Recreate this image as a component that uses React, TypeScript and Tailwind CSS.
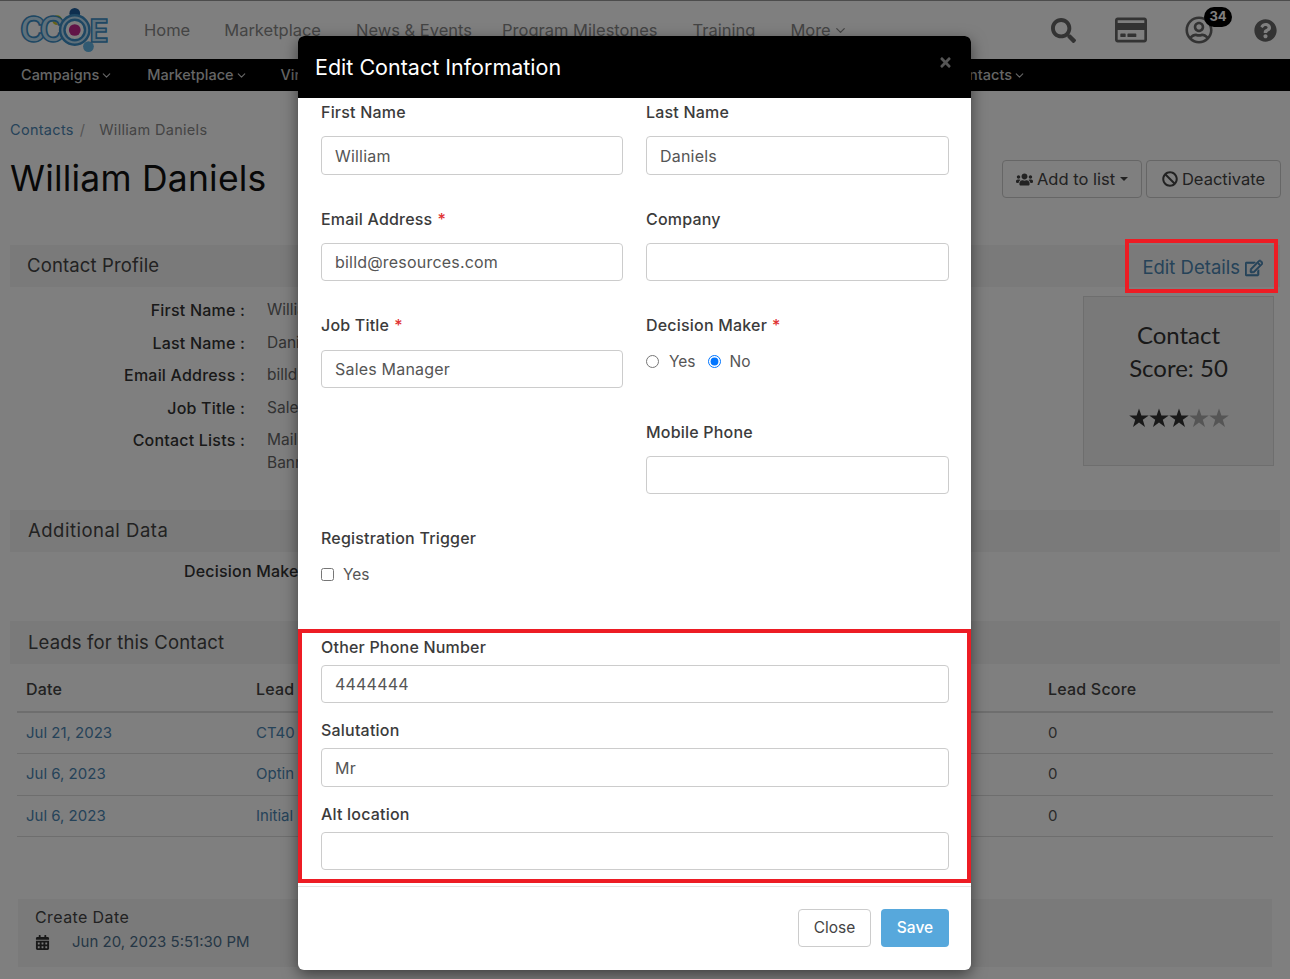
import {
  FaBan,
  FaCalendarAlt,
  FaQuestionCircle,
  FaRegCreditCard,
  FaRegEdit,
  FaRegUserCircle,
  FaSearch,
  FaTimes,
  FaUsers,
} from 'react-icons/fa'
import { ChevronDown } from 'lucide-react'

const TOP_NAV = [
  { label: 'Home', left: 'ml-[36px]' },
  { label: 'Marketplace', left: 'ml-[34px]' },
  { label: 'News & Events', left: 'ml-[35px]' },
  { label: 'Program Milestones', left: 'ml-[30px]' },
  { label: 'Training', left: 'ml-[35px]' },
]

const PROFILE_ROWS = [
  { label: 'First Name :', value: 'William', row: 'h-[32px]' },
  { label: 'Last Name :', value: 'Daniels', row: 'h-[33px]' },
  { label: 'Email Address :', value: 'billd@resources.com', row: 'h-[32px]' },
  { label: 'Job Title :', value: 'Sales Manager', row: 'h-[33px]' },
  { label: 'Contact Lists :', value: 'Mailing', row: 'mt-[4px] h-[23px]' },
  { label: '', value: 'Banner', row: 'h-[23px]' },
]

const LEADS = [
  { date: 'Jul 21, 2023', lead: 'CT40', score: '0' },
  { date: 'Jul 6, 2023', lead: 'Optin', score: '0' },
  { date: 'Jul 6, 2023', lead: 'Initial', score: '0' },
]

function Logo() {
  return (
    <svg width="88" height="52" viewBox="0 0 90 52" className="ml-[20px] shrink-0">
      <circle cx="38" cy="16" r="5" fill="#c9c72e" />
      <circle cx="56" cy="9" r="5.5" fill="#1c5f9e" />
      <circle cx="70" cy="43" r="5.5" fill="#62b5e5" />
      <text x="0" y="38" fontFamily="Inter, sans-serif" fontWeight="700" fontSize="36" fill="#bfe0f5" stroke="#3d8fc6" strokeWidth="1.6">C</text>
      <text x="20" y="38" fontFamily="Inter, sans-serif" fontWeight="700" fontSize="36" fill="#bfe0f5" stroke="#3d8fc6" strokeWidth="1.6">C</text>
      <text x="71" y="38" fontFamily="Inter, sans-serif" fontWeight="700" fontSize="32" fill="#bfe0f5" stroke="#3d8fc6" strokeWidth="1.6" textLength="18">E</text>
      <circle cx="56" cy="26" r="15" fill="#bfe0f5" stroke="#3d8fc6" strokeWidth="2.5" />
      <circle cx="56" cy="26" r="10.5" fill="#fff" stroke="#3d8fc6" strokeWidth="2.5" />
      <circle cx="56" cy="26" r="6" fill="#c3288f" />
    </svg>
  )
}

function Star({ filled }: { filled: boolean }) {
  return (
    <svg width="20" height="20" viewBox="0 0 20 20" className={filled ? 'fill-[#333]' : 'fill-[#aaa]'}>
      <polygon points="10,0.5 12.4,7.4 19.8,7.4 13.8,11.8 16,19 10,14.6 4,19 6.2,11.8 0.2,7.4 7.6,7.4" />
    </svg>
  )
}

function SectionBar({ title, className }: { title: string; className: string }) {
  return (
    <div className={`flex items-center bg-[#f5f5f5] mx-[10px] text-[18.5px] text-[#444] ${className}`}>
      {title}
    </div>
  )
}

function FieldLabel({ children, required }: { children: string; required?: boolean }) {
  return (
    <div className="h-[24px] leading-[24px] text-[16px] font-medium text-[#3b3b3b] tracking-[0.2px]">
      {children}
      {required && <span className="text-[#e03131] ml-[5px]">*</span>}
    </div>
  )
}

function TextInput({ value, height = 'h-[38px]' }: { value?: string; height?: string }) {
  return (
    <input
      readOnly
      value={value ?? ''}
      className={`block w-full ${height} rounded-[4px] border border-[#ccc] bg-white px-[13px] text-[16px] text-[#555] tracking-[0.2px] outline-none`}
    />
  )
}

function Background() {
  return (
    <div className="h-[979px] overflow-hidden bg-white text-[#333]">
      <header className="flex h-[59px] items-center border-t border-[#999]">
        <Logo />
        {TOP_NAV.map((item) => (
          <span key={item.label} className={`${item.left} text-[16.5px] text-[#888] whitespace-nowrap`}>
            {item.label}
          </span>
        ))}
        <span className="ml-[35px] flex items-center gap-[2px] text-[16.5px] text-[#888]">
          More <ChevronDown size={15} strokeWidth={2} />
        </span>
        <div className="ml-auto flex items-center text-[#666]">
          <FaSearch className="text-[25px]" />
          <FaRegCreditCard className="ml-[39px] text-[32px]" />
          <div className="relative ml-[38px]">
            <FaRegUserCircle className="text-[28px]" />
            <span className="absolute left-[19px] top-[-9px] flex h-[20px] w-[28px] items-center justify-center rounded-full bg-black text-[13px] font-bold text-white">
              34
            </span>
          </div>
          <FaQuestionCircle className="ml-[41px] mr-[13px] text-[23px]" />
        </div>
      </header>

      <nav className="flex h-[32px] items-center bg-black pl-[21px] text-[14.5px] font-medium text-[#ccc]">
        <span className="flex items-center gap-[1px]">
          Campaigns <ChevronDown size={13} strokeWidth={2} />
        </span>
        <span className="ml-[34px] flex items-center gap-[1px]">
          Marketplace <ChevronDown size={13} strokeWidth={2} />
        </span>
        <span className="ml-[33px]">Vir</span>
        <span className="ml-auto mr-[264px] flex items-center gap-[1px]">
          Contacts <ChevronDown size={13} strokeWidth={2} />
        </span>
      </nav>

      <div className="mt-[28px] flex h-[22px] items-center pl-[10px] text-[14.5px] tracking-[0.3px]">
        <span className="text-[#4c86b3]">Contacts</span>
        <span className="ml-[6px] text-[#aaa]">/</span>
        <span className="ml-[14px] text-[#888]">William Daniels</span>
      </div>

      <div className="flex h-[76px] items-center pl-[10px] pr-[9px]">
        <h1 className="text-[35.5px] text-[#111] tracking-[0.2px]">William Daniels</h1>
        <button className="ml-auto flex h-[38px] w-[140px] items-center justify-center gap-[4px] rounded-[4px] border border-[#ccc] text-[16.5px] text-[#444]">
          <FaUsers className="text-[17px]" />
          Add to list
          <span className="ml-[1px] border-x-[4px] border-t-[4px] border-x-transparent border-t-[#444]" />
        </button>
        <button className="ml-[4px] flex h-[38px] w-[135px] items-center justify-center gap-[4px] rounded-[4px] border border-[#ccc] text-[16.5px] text-[#444]">
          <FaBan className="text-[16px]" />
          Deactivate
        </button>
      </div>

      <div className="mx-[10px] mt-[28px] flex h-[42px] items-center justify-between bg-[#f5f5f5] pl-[17px] pr-[17px] text-[18.5px] tracking-[0.15px] text-[#444]">
        Contact Profile
        <span className="flex items-center gap-[5px] pt-[4px] text-[18.5px] tracking-normal text-[#4c86b3]">
          Edit Details <FaRegEdit className="stroke-[20px] text-[18px]" />
        </span>
      </div>

      <div className="flex">
        <div className="w-[1083px] pt-[7px]">
          {PROFILE_ROWS.map((row) => (
            <div key={row.value} className={`flex items-center ${row.row}`}>
              <span className="w-[245px] text-right text-[16px] font-medium tracking-[0.2px] text-[#333]">{row.label}</span>
              <span className="ml-[22px] text-[15.5px] text-[#666]">{row.value}</span>
            </div>
          ))}
        </div>
        <div className="mt-[9px] flex h-[170px] w-[191px] flex-col items-center border border-[#ddd] bg-[#f2f2f2] pt-[21px] font-['Lato','Liberation_Sans',sans-serif] text-[24px] leading-[33px] text-[#333]">
          <div>Contact</div>
          <div>Score: 50</div>
          <div className="mt-[24px] flex">
            <Star filled />
            <Star filled />
            <Star filled />
            <Star filled={false} />
            <Star filled={false} />
          </div>
        </div>
      </div>

      <SectionBar title="Additional Data" className="mt-[36px] h-[42px] pl-[18px] tracking-[0.5px]" />
      <div className="flex h-[38px] items-center pl-[184px] text-[16px] font-medium tracking-[0.2px]">Decision Maker :</div>
      <SectionBar title="Leads for this Contact" className="mt-[31px] h-[43px] pl-[18px] tracking-[0.15px]" />

      <div className="mx-[17px] mt-[4px] w-[1256px] text-[15px]">
        <div className="flex h-[44.5px] items-center border-b-2 border-[#ddd] pl-[9px] text-[16px] font-medium tracking-[0.2px] text-[#444]">
          <span className="w-[230px]">Date</span>
          <span className="w-[792px]">Lead</span>
          <span>Lead Score</span>
        </div>
        {LEADS.map((lead) => (
          <div key={lead.lead} className="flex h-[41.5px] items-center border-b border-[#ddd] pl-[9px]">
            <span className="w-[230px] text-[#4c86b3]">{lead.date}</span>
            <span className="w-[792px] text-[#4c86b3]">{lead.lead}</span>
            <span className="text-[#555]">{lead.score}</span>
          </div>
        ))}
      </div>

      <div className="mx-[18px] mt-[61.5px] h-[68px] w-[1254px] bg-[#f5f5f5] pl-[17px] pt-[6px] text-[15px] text-[#444]">
        <div className="h-[25px] text-[16px] leading-[25px] tracking-[0.4px]">Create Date</div>
        <div className="flex h-[25px] items-center">
          <FaCalendarAlt className="text-[15px] text-[#333]" />
          <span className="ml-[22px] text-[#4c6f8c]">Jun 20, 2023 5:51:30 PM</span>
        </div>
      </div>
    </div>
  )
}

function Modal() {
  return (
    <div className="absolute left-[298px] top-[36px] flex h-[934px] w-[673px] flex-col overflow-hidden rounded-[6px] bg-white shadow-[0_5px_15px_rgba(0,0,0,0.5)]">
      <div className="relative flex h-[62px] shrink-0 items-center bg-black pl-[17px] text-[21.5px] text-white">
        Edit Contact Information
        <FaTimes className="absolute right-[18px] top-[19px] text-[15px] text-[#555]" />
      </div>

      <div className="grid h-[531px] shrink-0 grid-cols-[302px_303px] auto-rows-[106.6px] gap-x-[23px] pl-[23px] pt-[2px]">
        <div>
          <FieldLabel>First Name</FieldLabel>
          <div className="mt-[12px]"><TextInput value="William" height="h-[39px]" /></div>
        </div>
        <div>
          <FieldLabel>Last Name</FieldLabel>
          <div className="mt-[12px]"><TextInput value="Daniels" height="h-[39px]" /></div>
        </div>
        <div>
          <FieldLabel required>Email Address</FieldLabel>
          <div className="mt-[12px]"><TextInput value="billd@resources.com" /></div>
        </div>
        <div>
          <FieldLabel>Company</FieldLabel>
          <div className="mt-[12px]"><TextInput /></div>
        </div>
        <div>
          <FieldLabel required>Job Title</FieldLabel>
          <div className="mt-[13px]"><TextInput value="Sales Manager" /></div>
        </div>
        <div>
          <FieldLabel required>Decision Maker</FieldLabel>
          <div className="mt-[12px] flex h-[24px] items-center text-[15.5px] text-[#555]">
            <input type="radio" name="decision" readOnly className="m-0 h-[13px] w-[13px]" />
            <span className="ml-[10px]">Yes</span>
            <input type="radio" name="decision" readOnly checked className="ml-[12px] h-[13px] w-[13px]" />
            <span className="ml-[9px]">No</span>
          </div>
        </div>
        <div />
        <div>
          <FieldLabel>Mobile Phone</FieldLabel>
          <div className="mt-[12px]"><TextInput /></div>
        </div>
        <div>
          <FieldLabel>Registration Trigger</FieldLabel>
          <div className="mt-[12px] flex h-[24px] items-center text-[15.5px] text-[#555]">
            <input type="checkbox" readOnly className="m-0 h-[13px] w-[13px]" />
            <span className="ml-[9px]">Yes</span>
          </div>
        </div>
      </div>

      <div className="h-[254px] shrink-0 border-4 border-[#ed1c24] pl-[19px] pr-[18px] pt-[2px]">
        <FieldLabel>Other Phone Number</FieldLabel>
        <div className="mt-[6px]"><TextInput value="4444444" /></div>
        <div className="mt-[15px]"><FieldLabel>Salutation</FieldLabel></div>
        <div className="mt-[6px]"><TextInput value="Mr" height="h-[39px]" /></div>
        <div className="mt-[15px]"><FieldLabel>Alt location</FieldLabel></div>
        <div className="mt-[6px]"><TextInput /></div>
      </div>

      <div className="mt-[3px] flex flex-1 items-start justify-end gap-[10px] border-t border-[#e5e5e5] pr-[22px] pt-[22px]">
        <button className="h-[38px] w-[73px] rounded-[4px] border border-[#ccc] bg-white text-[15.5px] text-[#444]">Close</button>
        <button className="h-[38px] w-[68px] rounded-[4px] bg-[#57a8dc] text-[15.5px] font-medium text-white">Save</button>
      </div>
    </div>
  )
}

export default function App() {
  return (
    <div className="relative h-[979px] w-[1290px] overflow-hidden font-['Inter','Liberation_Sans',sans-serif]">
      <Background />
      <div className="absolute inset-0 bg-black/50" />
      {/* red annotation box drawn over the dimmed page */}
      <div className="absolute left-[1125px] top-[239px] h-[54px] w-[153px] border-4 border-[#ed1c24]" />
      <Modal />
    </div>
  )
}
